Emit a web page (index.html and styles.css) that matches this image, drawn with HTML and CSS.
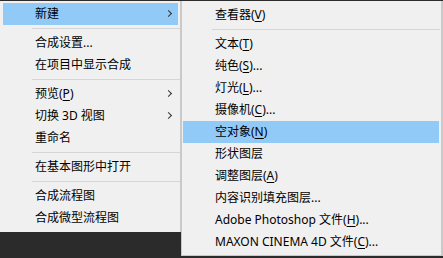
FILE: index.html
```html
<!DOCTYPE html>
<html lang="zh-CN">
<head>
    <meta charset="UTF-8">
    <title>新建菜单</title>
    <link rel="stylesheet" href="styles.css">
</head>
<body>

    <div class="menus">
        <ul class="menu main-menu">
            <li class="item active">新建<span class="arrow"></span></li>
            <li class="sep"></li>
            <li class="item">合成设置...</li>
            <li class="item">在项目中显示合成</li>
            <li class="sep"></li>
            <li class="item">预览(<u>P</u>)<span class="arrow"></span></li>
            <li class="item">切换 3D 视图<span class="arrow"></span></li>
            <li class="item">重命名</li>
            <li class="sep"></li>
            <li class="item">在基本图形中打开</li>
            <li class="sep"></li>
            <li class="item">合成流程图</li>
            <li class="item">合成微型流程图</li>
        </ul>

        <ul class="menu sub-menu">
            <li class="item">查看器(<u>V</u>)</li>
            <li class="sep"></li>
            <li class="item">文本(<u>T</u>)</li>
            <li class="item">纯色(<u>S</u>)...</li>
            <li class="item">灯光(<u>L</u>)...</li>
            <li class="item">摄像机(<u>C</u>)...</li>
            <li class="item active">空对象(<u>N</u>)</li>
            <li class="item">形状图层</li>
            <li class="item">调整图层(<u>A</u>)</li>
            <li class="item">内容识别填充图层...</li>
            <li class="item">Adobe Photoshop 文件(<u>H</u>)...</li>
            <li class="item">MAXON CINEMA 4D 文件(<u>C</u>)...</li>
        </ul>
    </div>

</body>
</html>
```

FILE: styles.css
```css
body {
    margin: 0;
    background: #2b2b2b;
    font-family: "Noto Sans", "Noto Sans CJK SC", sans-serif;
    font-size: 12px;
    color: #000;
}
.menus {
    display: flex;
    align-items: flex-start;
    padding-top: 1px;
}
.menu {
    list-style: none;
    margin: 0;
    background: #f0f0f0;
}
.main-menu {
    width: 180px;
    padding: 2px 0 3px;
    border-right: 1px solid #c9c9c9;
}
.sub-menu {
    flex: 1;
    padding: 3px 0 2px;
    border: 1px solid #c9c9c9;
    border-top: none;
    border-right-width: 2px;
}
.item {
    position: relative;
    height: 22px;
    line-height: 22px;
    white-space: nowrap;
}
.main-menu .item {
    margin: 0 2px 0 3px;
    padding-left: 32px;
}
.sub-menu .item {
    margin: 0 2px 0 1px;
    padding-left: 32px;
}
.item.active {
    background: #91c9f7;
}
.item u {
    text-underline-offset: 2px;
}
.sep {
    height: 7px;
    display: flex;
    align-items: center;
}
.sep::after {
    content: "";
    flex: 1;
    height: 1px;
    background: #d5d5d5;
}
.main-menu .sep {
    margin-left: 32px;
}
.sub-menu .sep {
    margin: 0 1px 0 30px;
}
.arrow {
    position: absolute;
    right: 7px;
    top: 8px;
    width: 4px;
    height: 4px;
    border-top: 1px solid #333;
    border-right: 1px solid #333;
    transform: rotate(45deg);
}
```
